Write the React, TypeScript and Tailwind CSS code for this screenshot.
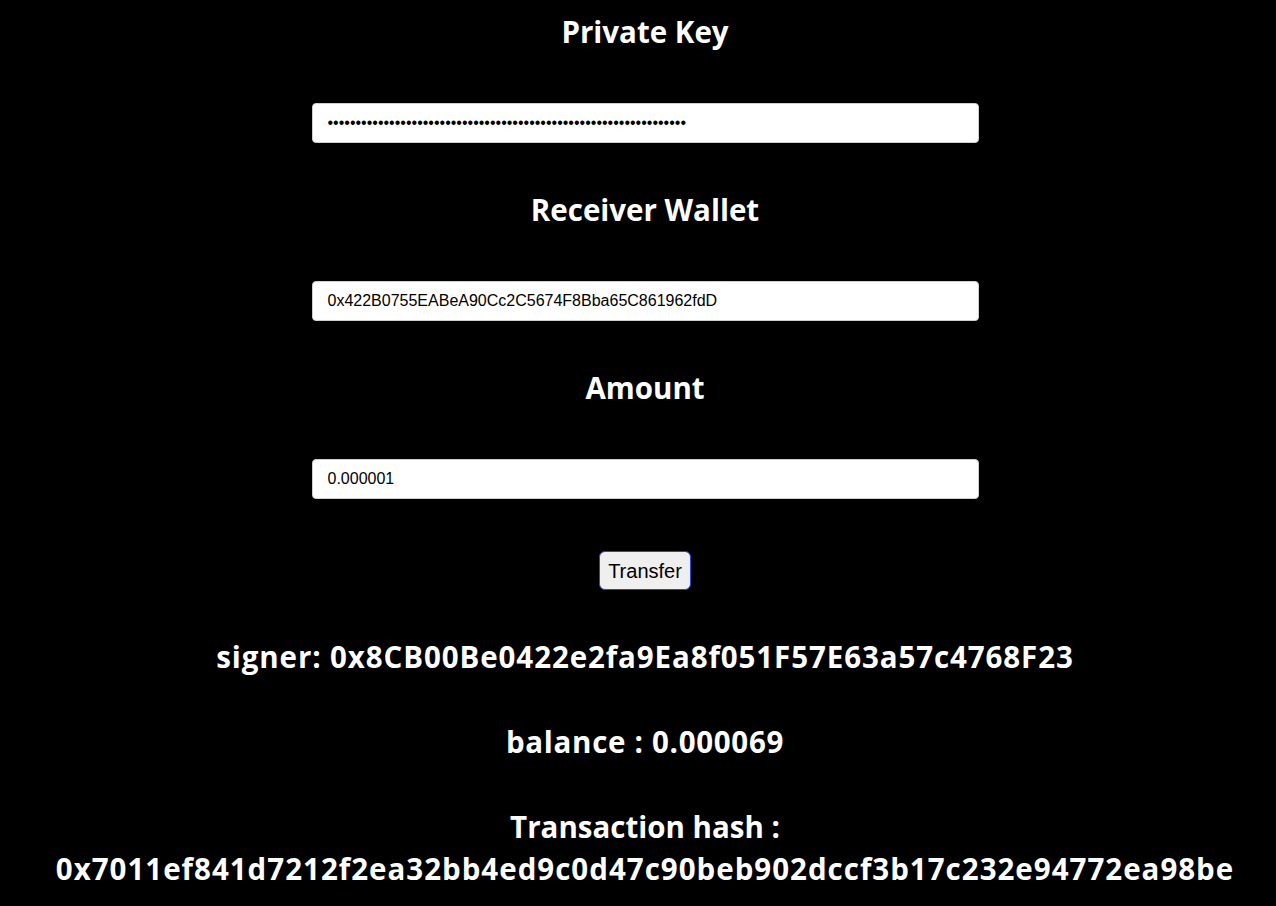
import { useState } from 'react'

const heading = 'text-[29.5px] leading-[42px] font-bold text-white text-center'
const field =
  'w-[667px] h-10 rounded-[4px] border border-[#cfcfcf] bg-white px-[15px] text-[16px] text-black outline-none'

export default function App() {
  const [pk, setPk] = useState('4c0883a69102937d6231471b5dbb6204fe5129617082792ae468d01a3f362318')
  const [to, setTo] = useState('0x422B0755EABeA90Cc2C5674F8Bba65C861962fdD')
  const [amount, setAmount] = useState('0.000001')

  return (
    <div
      className="min-h-[906px] w-full bg-black flex flex-col items-center pt-[11px] pl-[14px]"
      style={{ fontFamily: '"Open Sans", "Noto Sans", sans-serif' }}
    >
      <h2 className={heading}>Private Key</h2>
      <input
        type="password"
        value={pk}
        onChange={(e) => setPk(e.target.value)}
        className={`${field} mt-[50px]`}
        style={{ fontFamily: '"Liberation Sans", Arial, sans-serif' }}
      />

      <h2 className={`${heading} mt-[46px]`}>Receiver Wallet</h2>
      <input
        type="text"
        value={to}
        onChange={(e) => setTo(e.target.value)}
        className={`${field} mt-[50px]`}
        style={{ fontFamily: '"Liberation Sans", Arial, sans-serif' }}
      />

      <h2 className={`${heading} mt-[46px]`}>Amount</h2>
      <input
        type="text"
        value={amount}
        onChange={(e) => setAmount(e.target.value)}
        className={`${field} mt-[50px]`}
        style={{ fontFamily: '"Liberation Sans", Arial, sans-serif' }}
      />

      <button
        className="mt-[52px] h-[39px] rounded-[6px] border border-[#2747d8] bg-[#efefef] px-2 text-[20px] text-black"
        style={{ fontFamily: '"Liberation Sans", Arial, sans-serif' }}
      >
        Transfer
      </button>

      <h2 className={`${heading} mt-[46px] tracking-[0.9px]`}>
        signer: 0x8CB00Be0422e2fa9Ea8f051F57E63a57c4768F23
      </h2>
      <h2 className={`${heading} mt-[43px] tracking-[0.7px]`}>balance : 0.000069</h2>
      <h2 className={`${heading} mt-[43px]`}>
        Transaction hash :
        <br />
        <span className="tracking-[1px]">
          0x7011ef841d7212f2ea32bb4ed9c0d47c90beb902dccf3b17c232e94772ea98be
        </span>
      </h2>
    </div>
  )
}
